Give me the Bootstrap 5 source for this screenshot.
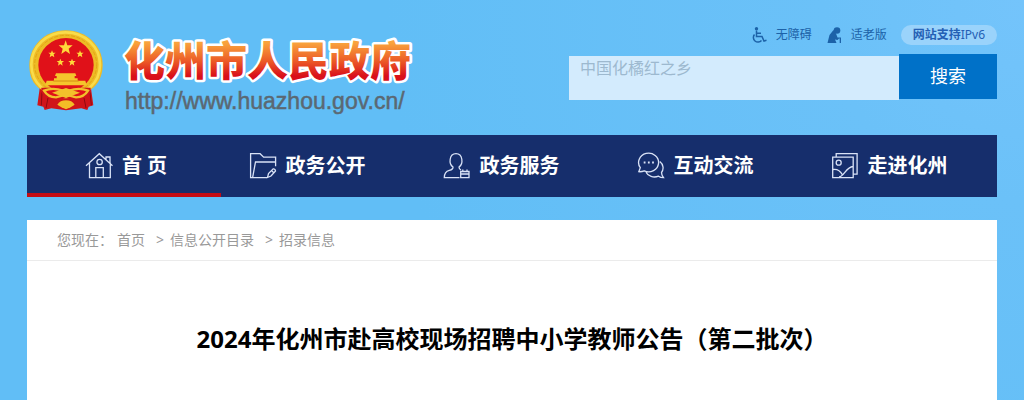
<!DOCTYPE html>
<html lang="zh-CN">
<head>
<meta charset="utf-8">
<meta name="viewport" content="width=device-width, initial-scale=1">
<title>2024年化州市赴高校现场招聘中小学教师公告（第二批次）</title>
<link href="https://cdn.jsdelivr.net/npm/bootstrap@5.3.0/dist/css/bootstrap.min.css" rel="stylesheet">
<style>
  body {
    font-family: "Noto Sans", "Noto Sans CJK SC", sans-serif;
    background: #61bef6 radial-gradient(circle at 100% 0, #74c4fb 0, #6bc1f8 200px, #61bef6 640px) no-repeat;
  }
  .page-wrap { padding: 0 27px; }
  .site-head { min-height: 135px; padding-top: 25px; }
  .emblem { width: 76px; height: 82px; margin: 5px 0 0 1px; }
  .brand { gap: 14px; }
  .brand-name { font: 900 41px/56px "Noto Sans CJK SC", sans-serif; fill: url(#fire); stroke: #fff; stroke-width: 5px; stroke-linejoin: round; paint-order: stroke; }
  .brand-url { padding-left: 7px; font: 23px/24px "Liberation Sans", sans-serif; color: #5b6872; -webkit-text-stroke: 0.5px #5b6872; }
  .head-side { width: 428px; }
  .tools { gap: 14px; font-size: 12px; line-height: 20px; }
  .tools a { color: #1c62a8; text-decoration: none; }
  .tools .tool-link { gap: 8px; }
  .tools .pill { background: #9ad3fb; color: #2460b4; border-radius: 10px; padding: 0 12px; }
  .search { margin-top: 9px; }
  .search input { height: 44px; margin-top: 2px; padding: 0 11px 20px; border: 0; border-radius: 0; background: #d3ebfd; font-size: 16px; line-height: 24px; min-width: 0; }
  .search input::placeholder { color: #9db9cf; opacity: 1; }
  .search button { width: 98px; height: 45px; border: 0; background: #0071c8; color: #fff; font-size: 18px; }
  .main-nav { background: #162e6c; }
  .main-nav a { height: 62px; gap: 9px; padding: 0 22px 0 0; border: solid transparent; border-width: 4px 0; color: #fff; font-size: 20px; font-weight: 700; white-space: nowrap; }
  .main-nav a.active { padding: 0 0 0 4px; border-bottom-color: #c40c14; }
  .main-nav svg { width: 28px; height: 28px; fill: none; stroke: #d9e2f6; stroke-width: 1.3; flex: none; }
  .panel { margin-top: 23px; background: #fff; }
  .crumbs { min-height: 41px; padding: 0 30px; border-bottom: 1px solid #ebebeb; font-size: 14px; line-height: 20px; color: #999; }
  .crumbs a { color: #999; text-decoration: none; }
  .crumbs ol { gap: 11px; }
  .crumbs li + li::before { content: ">"; margin-right: 6px; }
  .headline { margin: 0; padding: 60px 16px; font-size: 24px; line-height: 36px; font-weight: 700; color: #000; }
</style>
</head>
<body class="min-vh-100 d-flex flex-column">
<div class="page-wrap container-fluid flex-grow-1 d-flex flex-column">

  <header class="site-head d-flex justify-content-between align-items-start">
    <div class="brand d-flex">
      <svg class="emblem" viewBox="24 32 228 246" role="img" aria-label="国徽">
        <path d="M60 200L52 258l18 4 4 10 20-5 44 6 46-6 18 5 4-10 14-4-8-58z" fill="#d0141a"/>
        <path d="M66 218l-2 40M84 236l-6 30M210 218l4 40M192 236l6 30" stroke="#8f0a10" stroke-width="3"/>
        <path d="M137 33C76 33 28 78 28 138c0 32 10 56 34 72 46 24 110 24 152 0 20-14 34-40 34-72 0-60-50-105-111-105z" fill="#eebb25"/>
        <ellipse cx="137" cy="136" rx="103" ry="97" fill="none" stroke="#f9dc4a" stroke-width="8"/>
        <ellipse cx="137" cy="136" rx="93" ry="88" fill="none" stroke="#e2a615" stroke-width="3" stroke-dasharray="12 5"/>
        <ellipse cx="138" cy="137" rx="83" ry="81" fill="#e01119"/>
        <path d="M137 63l5 15h16l-12 10 4 16-13-9-13 9 4-16-12-10h16z" fill="#ffd83a"/>
        <g fill="#ffd83a">
          <path id="star" d="M96 93l3 7h8l-6 5 2 9-7-5-7 5 2-9-6-5h8z"/>
          <use href="#star" x="84"/><use href="#star" x="25" y="25"/><use href="#star" x="60" y="25"/>
        </g>
        <path d="M108 162h58l3 8h-5v7h9v7h23l4 14H76l4-14h22v-7h8v-7h-5z" fill="#f5c52c"/>
        <path d="M100 185h76" stroke="#d48e12" stroke-width="3"/>
        <path d="M64 205h148v14q-10 20-40 22l-34-6-34 6q-30-2-40-22z" fill="#d0141a"/>
        <path d="M72 214q20-8 42-4l24 6 24-6q22-4 42 4-12 20-36 20l-30-8-30 8q-24 0-36-20z" fill="#e01119" stroke="#f3c02b" stroke-width="7"/>
        <path d="M96 220l42-14 42 14-42 16z" fill="#f3c02b"/>
        <path d="M112 256q8-13 26-13t26 13l-12 8-14 6-14-6z" fill="#f3bd26"/>
      </svg>
      <div>
        <svg class="d-block" width="304" height="64" role="img" aria-label="化州市人民政府">
          <defs><linearGradient id="fire" x1="0" y1="0" x2="0" y2="1">
            <stop offset=".25" stop-color="#f9a33c"/><stop offset=".55" stop-color="#ec5b27"/><stop offset=".8" stop-color="#d9101a"/>
          </linearGradient></defs>
          <text class="brand-name" x="6" y="51">化州市人民政府</text>
        </svg>
        <div class="brand-url">http://www.huazhou.gov.cn/</div>
      </div>
    </div>

    <div class="head-side">
      <div class="tools d-flex justify-content-end">
        <a class="tool-link d-flex align-items-center" href="#">
          <svg width="17" height="18" viewBox="0 0 17 18" fill="none" stroke="#1c62a8" stroke-width="1.5"><circle cx="5.500" cy="2.800" r="1.700" fill="#1c62a8" stroke="none"/><path d="M5.500 4.500V10.500h5.500l2 4.500 2.500-.7M5.500 7.300h4.500M3.500 8.500a4.600 4.600 0 1 0 7 6"/></svg>
          <span>无障碍</span>
        </a>
        <a class="tool-link d-flex align-items-center" href="#">
          <svg width="17" height="18" viewBox="0 0 17 18" fill="#1c62a8"><circle cx="11" cy="4.500" r="3.300"/><path d="M7.500 4L3.500 9 1.500 17h9l-1.500-3.500 2.500.5 1.500-1.500h.7V17H15v-5.500h-3.500L10 7.500z"/></svg>
          <span>适老版</span>
        </a>
        <a class="pill" href="#"><b>网站支持</b>IPv6</a>
      </div>
      <form class="search d-flex align-items-start" role="search">
        <input class="flex-grow-1" type="text" placeholder="中国化橘红之乡" aria-label="搜索内容">
        <button type="button">搜索</button>
      </form>
    </div>
  </header>

  <nav class="main-nav" aria-label="主导航">
    <ul class="nav nav-fill row row-cols-5 g-0 flex-nowrap">
      <li class="col"><a class="active d-flex align-items-center justify-content-center text-decoration-none" href="#" aria-current="page">
        <svg viewBox="0 0 28 28"><path d="M1 13.700L14.300 1.700 27.500 13.700M4.500 10.700v15h20.800v-15M10.800 25.700v-10h7.500v10M21 7.500V5h4v6"/><circle cx="14.600" cy="10" r="2.700"/></svg>首 页</a></li>
      <li class="col"><a class="d-flex align-items-center justify-content-center text-decoration-none" href="#">
        <svg viewBox="0 0 28 28"><path d="M18 25.700H1.600V1.700h9.500l3.500 3.500h12v9M26.600 10H6.500L3.600 25.700M18.500 25.500l1-4 4.500-4.500q2-.5 2.500 2l-4.500 5zM22.500 18.500l2.500 2.500"/></svg>政务公开</a></li>
      <li class="col"><a class="d-flex align-items-center justify-content-center text-decoration-none" href="#">
        <svg viewBox="0 0 28 28"><path d="M16.500 25.700H1.300q0-6 5-7.300 4-1 3.700-3.400C5.500 12 6 1.700 13 1.700s7.500 10.300 3 13.300q0 2 2 3M17.700 19.500H26v6.200h-8.300zM17.700 22H26M19.800 17.500v2M24 17.500v2"/></svg>政务服务</a></li>
      <li class="col"><a class="d-flex align-items-center justify-content-center text-decoration-none" href="#">
        <svg viewBox="0 0 28 28"><path d="M1.800 19.700l1.500-4a10 9.300 0 1 1 4 3.200q-2.500 1-5.500.8zM22.800 9.500c4 3 4 8 1.700 11 0 2 .8 3.500 2 5.200q-3 0-5-1.500c-5 2-10.500 0-12.500-4"/><path d="M6.700 10.500h1.800M10.900 10.500h1.800M15.100 10.500h1.800" stroke-width="2"/></svg>互动交流</a></li>
      <li class="col"><a class="d-flex align-items-center justify-content-center text-decoration-none" href="#">
        <svg viewBox="0 0 28 28"><path d="M1.700 5.200h20.500v20.500H1.700zM5.200 5V1.700h20.900v20.500h-3.700M2 17.500q6-1 9.500 5.500M8 25c5 0 7-10 14-10.500"/><circle cx="7.700" cy="10.700" r="2.500"/></svg>走进化州</a></li>
    </ul>
  </nav>

  <main class="panel flex-grow-1">
    <nav class="crumbs d-flex align-items-center" aria-label="位置">
      <span>您现在：</span>
      <ol class="list-unstyled d-flex mb-0 ms-1">
        <li><a href="#">首页</a></li>
        <li><a href="#">信息公开目录</a></li>
        <li><a href="#">招录信息</a></li>
      </ol>
    </nav>
    <h1 class="headline text-center">2024年化州市赴高校现场招聘中小学教师公告（第二批次）</h1>
  </main>
</div>
<script src="https://cdn.jsdelivr.net/npm/bootstrap@5.3.0/dist/js/bootstrap.bundle.min.js"></script>
</body>
</html>
